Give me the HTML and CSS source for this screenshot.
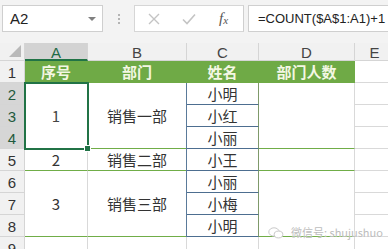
FILE: index.html
```html
<!DOCTYPE html>
<html lang="zh-CN">
<head>
	<meta charset="UTF-8">
	<meta name="viewport" content="width=device-width, initial-scale=1.0">
	<title>部门人数</title>
	<link rel="stylesheet" href="styles.css">
</head>
<body>
	<div class="topbar">
		<div class="namebox">
			<span>A2</span>
			<span class="caret"></span>
		</div>
		<div class="grip"><i></i><i></i><i></i></div>
		<div class="fxbox">
			<svg class="ico-x" width="12" height="12" viewBox="0 0 12 12"><path d="M1 1L11 11M11 1L1 11" stroke="#c4c4c4" stroke-width="1.4" fill="none"/></svg>
			<svg class="ico-ok" width="14" height="12" viewBox="0 0 14 12"><path d="M1 6.5L5 10.5L13 1.5" stroke="#c4c4c4" stroke-width="1.6" fill="none"/></svg>
			<span class="fx">f<sub>x</sub></span>
		</div>
		<div class="formula">=COUNT($A$1:A1)+1</div>
	</div>

	<div class="sheet">
		<div class="hd corner"><span class="tri"></span></div>
		<div class="hd col sel">A</div>
		<div class="hd col">B</div>
		<div class="hd col">C</div>
		<div class="hd col">D</div>
		<div class="hd col">E</div>

		<div class="hd row">1</div>
		<div class="cell title">序号</div>
		<div class="cell title">部门</div>
		<div class="cell title">姓名</div>
		<div class="cell title">部门人数</div>
		<div class="cell"></div>

		<div class="hd row sel">2</div>
		<div class="cell span3 grp picked">1<span class="handle"></span></div>
		<div class="cell span3 grp">销售一部</div>
		<div class="cell name">小明</div>
		<div class="cell span3 grp"></div>
		<div class="cell"></div>

		<div class="hd row sel">3</div>
		<div class="cell name">小红</div>
		<div class="cell"></div>

		<div class="hd row sel">4</div>
		<div class="cell name grp">小丽</div>
		<div class="cell"></div>

		<div class="hd row">5</div>
		<div class="cell grp">2</div>
		<div class="cell grp">销售二部</div>
		<div class="cell name grp">小王</div>
		<div class="cell grp"></div>
		<div class="cell"></div>

		<div class="hd row">6</div>
		<div class="cell span3 grp">3</div>
		<div class="cell span3 grp">销售三部</div>
		<div class="cell name">小丽</div>
		<div class="cell span3 grp"></div>
		<div class="cell"></div>

		<div class="hd row">7</div>
		<div class="cell name">小梅</div>
		<div class="cell"></div>

		<div class="hd row">8</div>
		<div class="cell name grp">小明</div>
		<div class="cell"></div>

		<div class="hd row">9</div>
		<div class="cell"></div>
		<div class="cell"></div>
		<div class="cell"></div>
		<div class="cell"></div>
		<div class="cell"></div>
	</div>

	<div class="watermark">
		<svg width="16" height="12" viewBox="0 0 16 12"><ellipse cx="6" cy="5" rx="5.2" ry="4.2" fill="none" stroke="#c9c9c9" stroke-width="1"/><ellipse cx="10.5" cy="7.5" rx="4.3" ry="3.4" fill="#fff" stroke="#c9c9c9" stroke-width="1"/></svg>
		<span>微信号: shujushuo</span>
	</div>
</body>
</html>
```

FILE: styles.css
```css
body{
	margin: 0;
	width: 388px;
	height: 249px;
	overflow: hidden;
	background: #fff;
	font-family: "Liberation Sans", Arial, sans-serif;
	position: relative;
}
.topbar{
	height: 43px;
	background: #f3f3f3;
	display: flex;
	align-items: flex-start;
	padding-top: 5px;
	box-sizing: border-box;
}
.namebox{
	width: 101px;
	height: 27px;
	margin-left: 2px;
	background: #fff;
	border: 1px solid #cfcfcf;
	box-sizing: border-box;
	display: flex;
	align-items: center;
	justify-content: space-between;
	padding: 0 6px 0 7px;
	font-size: 15px;
	color: #222;
}
.caret{
	width: 0;
	height: 0;
	border-left: 4px solid transparent;
	border-right: 4px solid transparent;
	border-top: 4px solid #808080;
}
.grip{
	width: 31px;
	height: 27px;
	display: flex;
	flex-direction: column;
	align-items: center;
	justify-content: center;
	gap: 2px;
}
.grip i{
	width: 2px;
	height: 2px;
	background: #b4b4b4;
}
.fxbox{
	width: 110px;
	height: 27px;
	background: #fff;
	border: 1px solid #d6d6d6;
	border-right: 1px solid #cfcfcf;
	box-sizing: border-box;
	display: flex;
	align-items: center;
	padding-left: 13px;
}
.ico-ok{
	margin-left: 22px;
}
.fx{
	margin-left: 23px;
	font-family: "Liberation Serif", serif;
	font-style: italic;
	font-size: 15px;
	color: #555;
}
.fx sub{
	font-size: 11px;
	vertical-align: -1px;
}
.formula{
	flex: 1;
	height: 27px;
	margin-left: 4px;
	background: #fff;
	border: 1px solid #cfcfcf;
	border-right: none;
	box-sizing: border-box;
	padding-left: 9px;
	font-size: 13px;
	line-height: 25px;
	color: #222;
	white-space: nowrap;
}
.sheet{
	display: grid;
	grid-template-columns: 25px 63px 99px 72px 96px 40px;
	grid-template-rows: 18px repeat(9, 22px);
}
.sheet > div{
	box-sizing: border-box;
	display: flex;
	align-items: center;
	justify-content: center;
}
.hd{
	background: #f1f1f1;
	color: #444;
	font-size: 15px;
	border-right: 1px solid #d5d5d5;
	border-bottom: 1px solid #d5d5d5;
}
.hd.col{
	padding-top: 2px;
}
.hd.col.sel{
	background: #d3d3d3;
	color: #1f6b45;
	border-bottom: 2px solid #217346;
}
.hd.row{
	padding-top: 2px;
	color: #333;
}
.hd.row.sel{
	background: #d6d6d6;
	color: #1f5a3c;
}
.corner{
	position: relative;
}
.tri{
	position: absolute;
	right: 3px;
	bottom: 3px;
	width: 12px;
	height: 12px;
	background: #b9b9b9;
	clip-path: polygon(100% 0, 100% 100%, 0 100%);
}
.cell{
	border-right: 1px solid #d9d9d9;
	border-bottom: 1px solid #d9d9d9;
	font-family: "Noto Sans CJK SC", sans-serif;
	font-size: 15px;
	color: #333;
}
.cell.title{
	background: #6faa46;
	border-color: #6faa46;
	color: #f4f7e4;
	font-weight: bold;
}
.span3{
	grid-row: span 3;
}
.grp{
	border-bottom-color: #70ad47;
}
.name{
	border-bottom-color: #4d6e90;
	border-right-color: #7f9a6a;
	box-shadow: -1px 0 0 #5a7a9a;
}
.picked{
	position: relative;
	z-index: 1;
	outline: 2px solid #217346;
	outline-offset: -1px;
	color: #444;
}
.handle{
	position: absolute;
	right: -4px;
	bottom: -4px;
	width: 5px;
	height: 5px;
	background: #217346;
	border: 1px solid #fff;
}
.watermark{
	position: absolute;
	left: 268px;
	top: 225px;
	display: flex;
	align-items: center;
	gap: 7px;
	white-space: nowrap;
	font-family: "Noto Sans CJK SC", sans-serif;
	font-size: 11px;
	line-height: 15px;
	color: #bdbdbd;
	text-shadow: 0 0 2px #fff;
}
```
